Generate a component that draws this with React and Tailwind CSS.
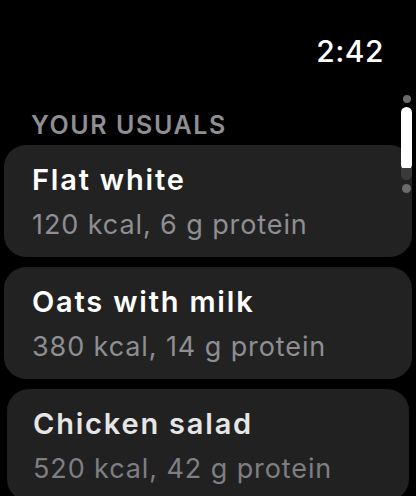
import React from "react";

const items = [
  { name: "Flat white", info: "120 kcal, 6 g protein" },
  { name: "Oats with milk", info: "380 kcal, 14 g protein" },
];

export default function App() {
  return (
    <div
      className="relative w-[416px] h-[496px] bg-black overflow-hidden"
      style={{ fontFamily: "Inter, 'Noto Sans', sans-serif" }}
    >
      <div className="flex justify-end pr-[32px] pt-[33px]">
        <span className="text-[30px] leading-[36px] font-medium text-white tracking-[0.5px]">2:42</span>
      </div>
      <div className="pl-[31px] mt-[41px] text-[25px] leading-[30px] font-semibold text-[#8e8e93] tracking-[1.6px]">
        YOUR USUALS
      </div>
      <div className="flex flex-col gap-[10px] px-[4px] mt-[5px]">
        {items.map((it) => (
          <div key={it.name} className="h-[112px] rounded-[22px] bg-[#222222] pl-[28px] pt-[16px]">
            <div className="text-[29px] leading-[38px] font-semibold text-white tracking-[1.8px]">{it.name}</div>
            <div className="text-[27px] leading-[36px] text-[#8e8e93] mt-[8px] tracking-[0.9px]">{it.info}</div>
          </div>
        ))}
        <div className="mx-[3px] h-[112px] rounded-[22px] bg-[#212121] pl-[26px] pt-[16px]">
          <div className="text-[29px] leading-[38px] font-semibold text-[#e6e6e6] tracking-[1.8px]">Chicken salad</div>
          <div className="text-[27px] leading-[36px] text-[#7e7e83] mt-[8px] tracking-[0.9px]">520 kcal, 42 g protein</div>
        </div>
      </div>
      <div className="absolute left-[401px] top-[95px] w-[11px] flex flex-col items-center">
        <div className="w-[8px] h-[8px] rounded-full bg-[#6b6b6b]" />
        <div className="mt-[4px] w-[11px] h-[63px] rounded-full bg-white" />
        <div className="-mt-[2px] w-[11px] h-[12px] rounded-b-full bg-[#3a3a3a]" />
        <div className="mt-[4px] w-[9px] h-[9px] rounded-full bg-[#6b6b6b]" />
      </div>
    </div>
  );
}
